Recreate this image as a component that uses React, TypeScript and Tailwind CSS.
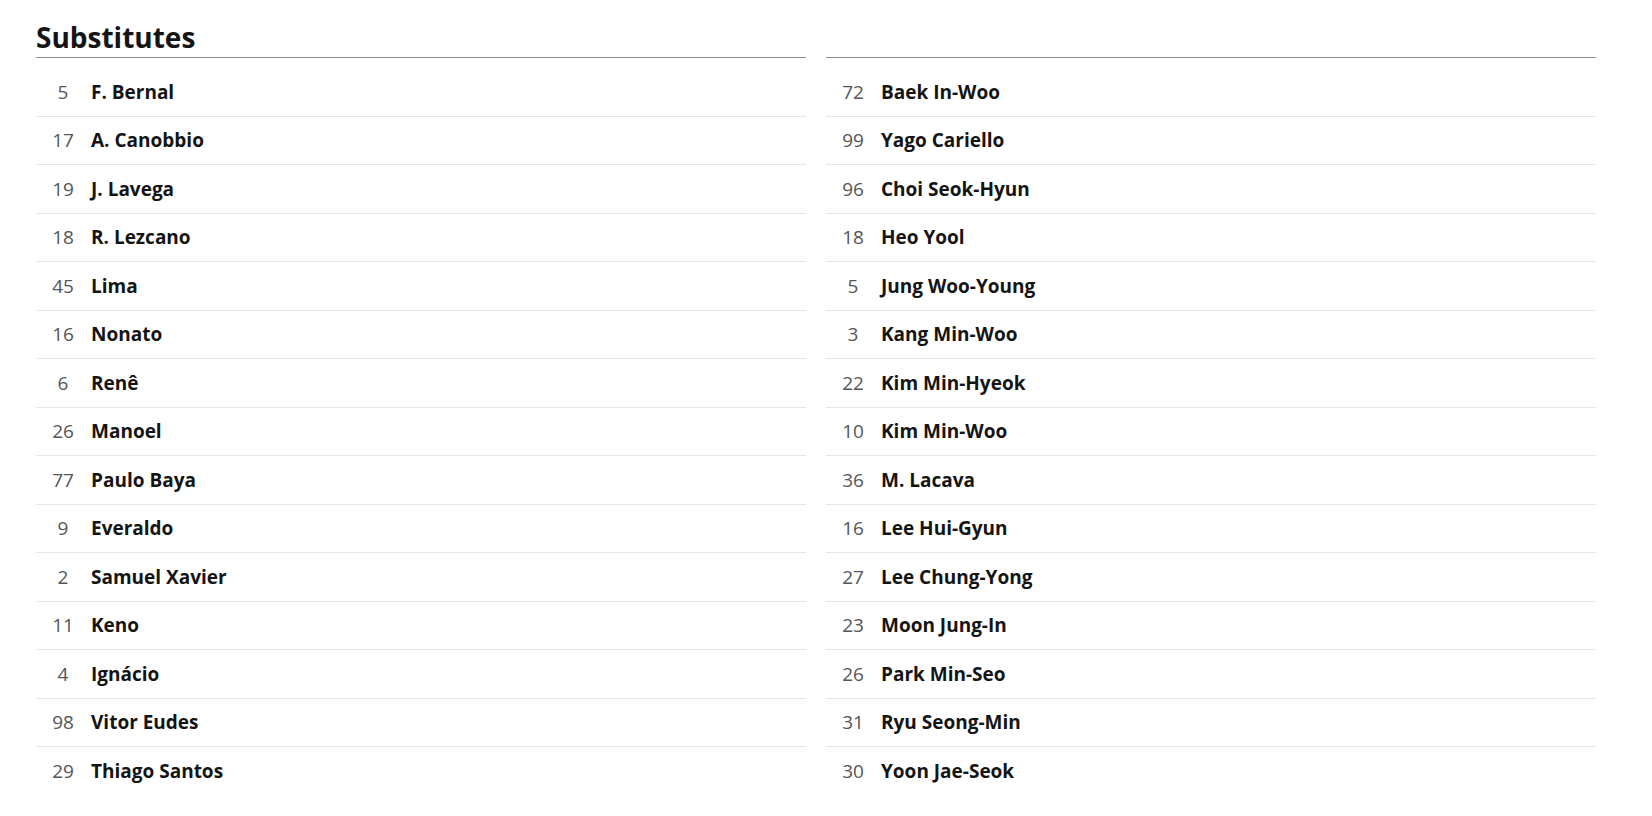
const left: [number, string][] = [
  [5, "F. Bernal"],
  [17, "A. Canobbio"],
  [19, "J. Lavega"],
  [18, "R. Lezcano"],
  [45, "Lima"],
  [16, "Nonato"],
  [6, "Renê"],
  [26, "Manoel"],
  [77, "Paulo Baya"],
  [9, "Everaldo"],
  [2, "Samuel Xavier"],
  [11, "Keno"],
  [4, "Ignácio"],
  [98, "Vitor Eudes"],
  [29, "Thiago Santos"],
];

const right: [number, string][] = [
  [72, "Baek In-Woo"],
  [99, "Yago Cariello"],
  [96, "Choi Seok-Hyun"],
  [18, "Heo Yool"],
  [5, "Jung Woo-Young"],
  [3, "Kang Min-Woo"],
  [22, "Kim Min-Hyeok"],
  [10, "Kim Min-Woo"],
  [36, "M. Lacava"],
  [16, "Lee Hui-Gyun"],
  [27, "Lee Chung-Yong"],
  [23, "Moon Jung-In"],
  [26, "Park Min-Seo"],
  [31, "Ryu Seong-Min"],
  [30, "Yoon Jae-Seok"],
];

function PlayerList({ players }: { players: [number, string][] }) {
  return (
    <ul className="mt-[10px]">
      {players.map(([num, name], i) => (
        <li
          key={name}
          className={
            "flex items-center h-[48.5px] " +
            (i < players.length - 1 ? "border-b border-[#e6e6e6]" : "")
          }
        >
          <span className="w-[54px] text-center text-[19px] text-[#545658]">{num}</span>
          <span className="pl-[1px] text-[19px] font-bold text-[#141414]">{name}</span>
        </li>
      ))}
    </ul>
  );
}

export default function App() {
  return (
    <div
      className="min-h-screen bg-white pl-[36px] pr-[56px] pt-[19px]"
      style={{ fontFamily: '"Open Sans", "Noto Sans", sans-serif' }}
    >
      <div className="grid grid-cols-2 gap-x-[20px]">
        <div>
          <div className="border-b border-[#8c8c8c] pb-[2px]">
            <h2 className="text-[28px] leading-[36px] font-bold text-[#141414]">Substitutes</h2>
          </div>
          <PlayerList players={left} />
        </div>
        <div>
          <div className="h-[39px] border-b border-[#8c8c8c]" />
          <PlayerList players={right} />
        </div>
      </div>
    </div>
  );
}
